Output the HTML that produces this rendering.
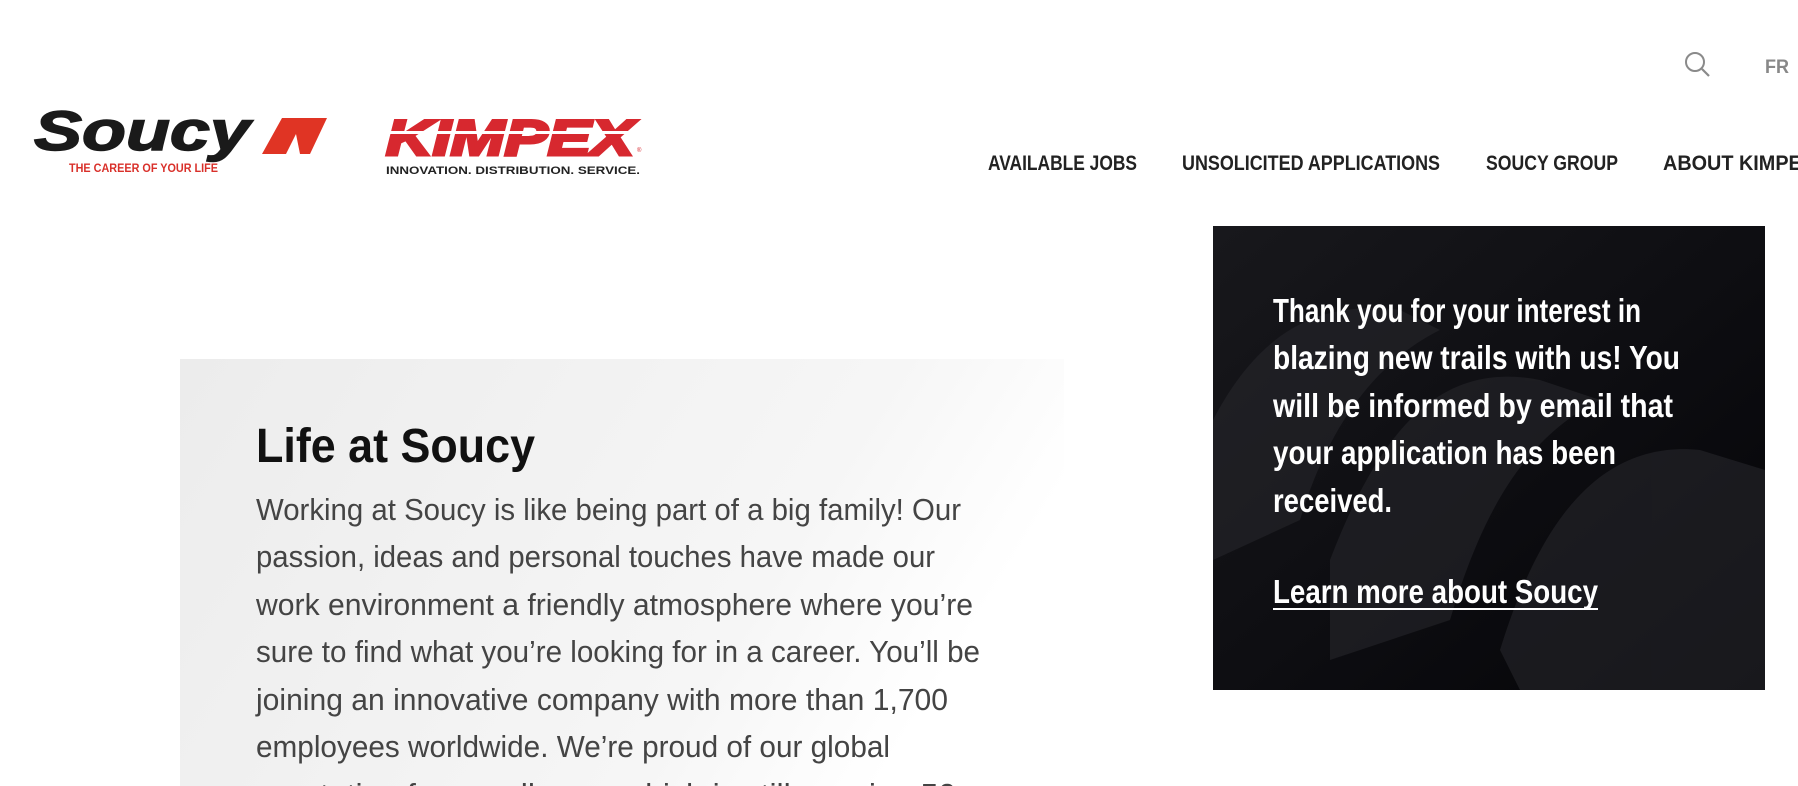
<!DOCTYPE html>
<html><head><meta charset="utf-8"><style>
html,body{margin:0;padding:0;background:#fff;width:1798px;height:786px;overflow:hidden}
svg{display:block}
text{font-family:"Liberation Sans",sans-serif}
</style></head><body>
<svg width="1798" height="786" viewBox="0 0 1798 786" xmlns="http://www.w3.org/2000/svg">
<defs>
<linearGradient id="gb" x1="0" y1="0" x2="1" y2="0.3">
<stop offset="0" stop-color="#ececec"/><stop offset="0.75" stop-color="#f6f6f6"/><stop offset="1" stop-color="#ffffff"/>
</linearGradient>
<linearGradient id="db" x1="0" y1="0" x2="1" y2="1">
<stop offset="0" stop-color="#18181c"/><stop offset="0.5" stop-color="#0e0e12"/><stop offset="1" stop-color="#040407"/>
</linearGradient>
<clipPath id="bc"><rect x="1213" y="226" width="552" height="464"/></clipPath>
</defs>

<!-- Soucy logo -->
<text x="34" y="150" font-size="56" font-weight="bold" font-style="italic" fill="#1a1a1a" stroke="#1a1a1a" stroke-width="1.5" textLength="216" lengthAdjust="spacingAndGlyphs">Soucy</text>
<polygon points="262,154 282,118 300,118 292,135 300,118 327,118 310,154" fill="#e03424"/>
<polygon points="286,154 296,134 300,154" fill="#fff"/>
<text x="69" y="172" font-size="12" font-weight="bold" fill="#d9302a" textLength="149" lengthAdjust="spacingAndGlyphs">THE CAREER OF YOUR LIFE</text>

<!-- Kimpex logo -->
<text x="386" y="155" font-size="50" font-weight="bold" font-style="italic" fill="#d7282f" stroke="#d7282f" stroke-width="3" textLength="248" lengthAdjust="spacingAndGlyphs">KIMPEX</text>
<rect x="380" y="131" width="260" height="3" fill="#fff"/>
<text x="637" y="152" font-size="6" fill="#d7282f">®</text>
<text x="386" y="174" font-size="11" font-weight="bold" fill="#222" textLength="254" lengthAdjust="spacingAndGlyphs">INNOVATION. DISTRIBUTION. SERVICE.</text>

<!-- top right -->
<circle cx="1695" cy="62" r="9" fill="none" stroke="#8a8a8a" stroke-width="2"/>
<line x1="1702" y1="69" x2="1709" y2="76" stroke="#8a8a8a" stroke-width="2.2"/>
<text x="1765" y="73" font-size="19" font-weight="bold" fill="#888" textLength="24" lengthAdjust="spacingAndGlyphs">FR</text>

<!-- nav -->
<g font-size="21" font-weight="bold" fill="#222">
<text x="988" y="170" textLength="149" lengthAdjust="spacingAndGlyphs">AVAILABLE JOBS</text>
<text x="1182" y="170" textLength="258" lengthAdjust="spacingAndGlyphs">UNSOLICITED APPLICATIONS</text>
<text x="1486" y="170" textLength="132" lengthAdjust="spacingAndGlyphs">SOUCY GROUP</text>
<text x="1663" y="170" textLength="152" lengthAdjust="spacingAndGlyphs">ABOUT KIMPEX</text>
</g>

<!-- gray box -->
<rect x="180" y="359" width="884" height="427" fill="url(#gb)"/>
<text x="256" y="462" font-size="48" font-weight="bold" fill="#111" textLength="279" lengthAdjust="spacingAndGlyphs">Life at Soucy</text>
<g font-size="31" fill="#444">
<text x="256" y="520" textLength="705" lengthAdjust="spacingAndGlyphs">Working at Soucy is like being part of a big family! Our</text>
<text x="256" y="567" textLength="679" lengthAdjust="spacingAndGlyphs">passion, ideas and personal touches have made our</text>
<text x="256" y="615" textLength="717" lengthAdjust="spacingAndGlyphs">work environment a friendly atmosphere where you’re</text>
<text x="256" y="662" textLength="724" lengthAdjust="spacingAndGlyphs">sure to find what you’re looking for in a career. You’ll be</text>
<text x="256" y="710" textLength="692" lengthAdjust="spacingAndGlyphs">joining an innovative company with more than 1,700</text>
<text x="256" y="757" textLength="634" lengthAdjust="spacingAndGlyphs">employees worldwide. We’re proud of our global</text>
<text x="256" y="805" textLength="700" lengthAdjust="spacingAndGlyphs">reputation for excellence, which is still growing 50</text>
</g>

<!-- dark box -->
<rect x="1213" y="226" width="552" height="464" fill="url(#db)"/>
<g clip-path="url(#bc)" fill="#26262b" opacity="0.6">
<path d="M1213,420 C1260,330 1320,300 1400,310 L1440,330 C1380,360 1330,420 1300,520 L1213,560 Z"/>
<path d="M1330,560 C1380,430 1440,360 1540,380 L1600,400 C1520,440 1480,520 1450,620 L1330,660 Z"/>
<path d="M1500,650 C1540,520 1600,440 1700,450 L1765,470 L1765,690 L1520,690 Z"/>
</g>
<g font-size="33" font-weight="bold" fill="#fff">
<text x="1273" y="322" textLength="368" lengthAdjust="spacingAndGlyphs">Thank you for your interest in</text>
<text x="1273" y="369" textLength="407" lengthAdjust="spacingAndGlyphs">blazing new trails with us! You</text>
<text x="1273" y="417" textLength="400" lengthAdjust="spacingAndGlyphs">will be informed by email that</text>
<text x="1273" y="464" textLength="343" lengthAdjust="spacingAndGlyphs">your application has been</text>
<text x="1273" y="512" textLength="119" lengthAdjust="spacingAndGlyphs">received.</text>
<text x="1273" y="603" textLength="325" lengthAdjust="spacingAndGlyphs">Learn more about Soucy</text>
</g>
<rect x="1273" y="608" width="325" height="2" fill="#fff"/>
</svg>
</body></html>
